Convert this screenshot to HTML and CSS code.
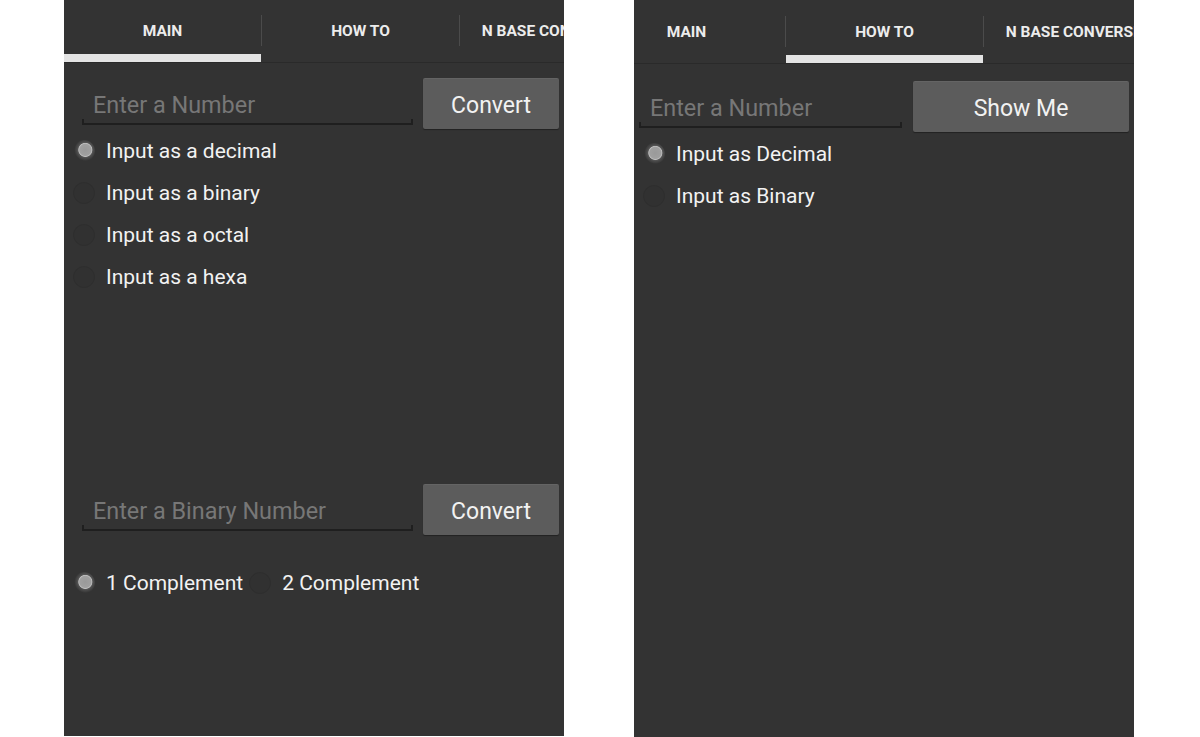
FILE: index.html
```html
<!DOCTYPE html>
<html lang="en">
<head>
<meta charset="utf-8">
<title>Base Converter</title>
<link rel="stylesheet" href="styles.css">
</head>
<body>
<div class="screens">
  <section class="panel">
    <nav class="tabbar">
      <div class="tabs">
        <div class="tab tab-active"><span class="tab-label">MAIN</span><span class="tab-ind"></span></div>
        <span class="sep"></span>
        <div class="tab"><span class="tab-label">HOW TO</span><span class="tab-ind"></span></div>
        <span class="sep"></span>
        <div class="tab"><span class="tab-label">N BASE CONVERSION</span><span class="tab-ind"></span></div>
      </div>
    </nav>
    <div class="content">
      <div class="entry">
        <input class="field" type="text" placeholder="Enter a Number">
        <button class="btn btn-narrow">Convert</button>
      </div>
      <div class="radio-list">
        <label class="radio"><span class="dot dot-on"></span><span class="rlabel">Input as a decimal</span></label>
        <label class="radio"><span class="dot"></span><span class="rlabel">Input as a binary</span></label>
        <label class="radio"><span class="dot"></span><span class="rlabel">Input as a octal</span></label>
        <label class="radio"><span class="dot"></span><span class="rlabel">Input as a hexa</span></label>
      </div>
      <div class="entry entry-lower">
        <input class="field" type="text" placeholder="Enter a Binary Number">
        <button class="btn btn-narrow">Convert</button>
      </div>
      <div class="radio-inline">
        <label class="radio"><span class="dot dot-on"></span><span class="rlabel">1 Complement</span></label>
        <label class="radio"><span class="dot"></span><span class="rlabel">2 Complement</span></label>
      </div>
    </div>
  </section>

  <section class="panel panel-b">
    <nav class="tabbar">
      <div class="tabs tabs-scrolled">
        <div class="tab"><span class="tab-label">MAIN</span><span class="tab-ind"></span></div>
        <span class="sep"></span>
        <div class="tab tab-active"><span class="tab-label">HOW TO</span><span class="tab-ind"></span></div>
        <span class="sep"></span>
        <div class="tab"><span class="tab-label">N BASE CONVERSION</span><span class="tab-ind"></span></div>
      </div>
    </nav>
    <div class="content">
      <div class="entry entry-b">
        <input class="field field-b" type="text" placeholder="Enter a Number">
        <button class="btn btn-wide">Show Me</button>
      </div>
      <div class="radio-list">
        <label class="radio"><span class="dot dot-on"></span><span class="rlabel">Input as Decimal</span></label>
        <label class="radio"><span class="dot"></span><span class="rlabel">Input as Binary</span></label>
      </div>
    </div>
  </section>
</div>
</body>
</html>
```
FILE: styles.css
```css
* { box-sizing: border-box; }

html, body {
  margin: 0;
  padding: 0;
  background: #ffffff;
}

body {
  font-family: Roboto, "Liberation Sans", Arial, sans-serif;
}

.screens {
  display: flex;
  gap: 70px;
  padding-left: 64px;
  height: 737px;
}

.panel {
  width: 500px;
  height: 736px;
  background: #333333;
  overflow: hidden;
  flex: none;
}

.panel-b {
  height: 737px;
}

/* ---------- tab bar ---------- */
.tabbar {
  height: 63px;
  border-bottom: 1px solid #2a2a2a;
  overflow: hidden;
}

.panel-b .tabbar {
  height: 64px;
}

.tabs {
  display: flex;
  height: 62px;
}

.panel-b .tabs {
  height: 63px;
}

.tabs-scrolled {
  margin-left: -46px;
}

.tab {
  width: 197px;
  flex: none;
  display: flex;
  flex-direction: column;
}

.tab-label {
  display: block;
  padding-top: 8px;
  height: 54px;
  line-height: 46px;
  text-align: center;
  white-space: nowrap;
  color: #ececec;
  font-size: 15.5px;
  font-weight: 700;
}

.panel-b .tab-label {
  padding-top: 9px;
  height: 55px;
}

.tab-ind {
  display: block;
  height: 8px;
}

.tab-active .tab-ind {
  background: #e4e4e4;
}

.sep {
  flex: none;
  width: 1px;
  height: 31px;
  margin-top: 15px;
  background: #4b4b4b;
}

.panel-b .sep {
  margin-top: 16px;
}

/* ---------- entry rows ---------- */
.entry {
  display: flex;
  align-items: flex-start;
  gap: 10px;
  padding: 15px 5px 0 18px;
}

.entry-lower {
  margin-top: 171px;
}

.entry-b {
  padding: 17px 5px 0 5px;
  gap: 11px;
}

.field {
  flex: 1;
  min-width: 0;
  height: 47px;
  padding: 9px 0 0 11px;
  border: 0;
  border-bottom: 2px solid #1f1f1f;
  outline: none;
  font-family: inherit;
  font-size: 23.4px;
  color: #eeeeee;
  background:
    linear-gradient(#1f1f1f, #1f1f1f) left bottom / 2px 4px no-repeat,
    linear-gradient(#1f1f1f, #1f1f1f) right bottom / 2px 4px no-repeat;
}

.field-b {
  padding-left: 11px;
}

.field::placeholder {
  color: #777777;
  opacity: 1;
}

.btn {
  flex: none;
  height: 51px;
  padding: 4px 0 0;
  border: 0;
  border-radius: 2px;
  background: #5c5c5c;
  box-shadow: 0 1px 1px rgba(0, 0, 0, 0.35), inset 0 1px 0 rgba(255, 255, 255, 0.05);
  color: #f2f2f2;
  font-family: inherit;
  font-size: 23px;
}

.btn-narrow { width: 136px; }
.btn-wide { width: 216px; }

/* ---------- radios ---------- */
.radio-list {
  margin-top: 1px;
  padding-left: 9px;
}

.radio {
  display: flex;
  align-items: center;
  gap: 11px;
  height: 42px;
}

.rlabel {
  color: #f2f2f2;
  font-size: 21px;
  white-space: nowrap;
}

.dot {
  flex: none;
  width: 22px;
  height: 22px;
  border-radius: 50%;
  border: 1px solid #2e2e2e;
  background: #313131;
}

.dot-on {
  border: 0;
  background: radial-gradient(circle at 56% 45%,
    #999999 0,
    #a0a0a0 5.6px,
    #bebebe 6.6px,
    #555555 7.4px,
    #484848 8.6px,
    #3e3e3e 9.8px,
    rgba(51, 51, 51, 0) 11px);
}

.radio-inline {
  display: flex;
  gap: 6px;
  margin-top: 27px;
  padding-left: 9px;
}
```
